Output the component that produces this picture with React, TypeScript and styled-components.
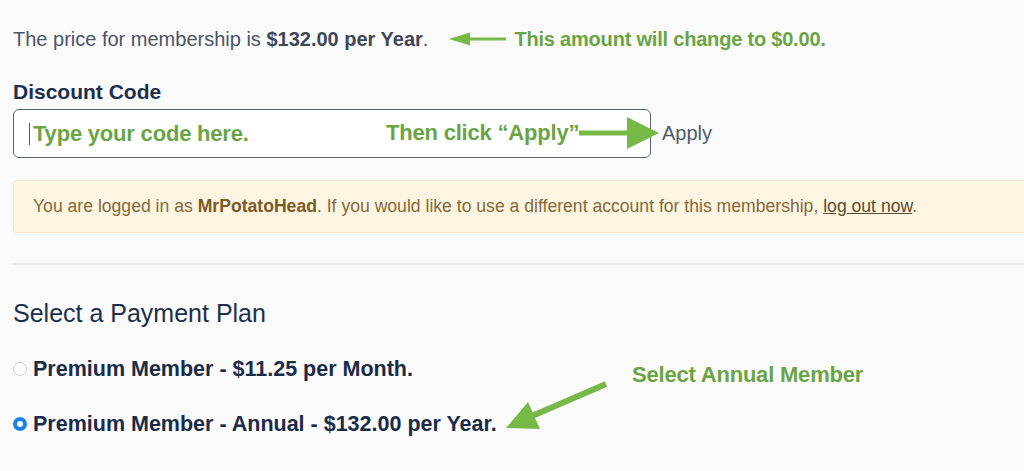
import React from "react";
import styled, { createGlobalStyle } from "styled-components";

const GlobalStyle = createGlobalStyle`
  body {
    margin: 0;
    background: #fafafa;
    font-family: "Liberation Sans", Arial, sans-serif;
  }
`;

const Page = styled.div`
  position: relative;
  width: 1024px;
  height: 471px;
  overflow: hidden;
  padding: 27px 0 0 13px;
  box-sizing: border-box;
`;

const PriceRow = styled.div`
  display: flex;
  align-items: center;
  height: 24px;
`;

const PriceText = styled.p`
  margin: 0;
  font-size: 20px;
  color: #4a5566;
  b {
    color: #3e4858;
  }
`;

const Note = styled.span<{ $size?: number }>`
  font-weight: bold;
  font-size: ${(p) => p.$size || 20}px;
  color: #6aa444;
  letter-spacing: -0.2px;
  white-space: nowrap;
`;

const Label = styled.div`
  margin-top: 30px;
  font-size: 21px;
  line-height: 22px;
  font-weight: bold;
  color: #1d2f4e;
`;

const InputRow = styled.div`
  position: relative;
  display: flex;
  align-items: center;
  margin-top: 6px;
`;

const CodeBox = styled.div`
  width: 638px;
  height: 49px;
  box-sizing: border-box;
  border: 1px solid #59667a;
  border-radius: 6px;
  background: #fff;
  display: flex;
  align-items: center;
  padding-left: 15px;
`;

const Caret = styled.span`
  width: 1px;
  height: 22px;
  background: #555;
  margin-right: 3px;
`;

const ApplyButton = styled.button`
  border: none;
  background: none;
  padding: 0;
  margin-left: 11px;
  font-family: inherit;
  font-size: 20px;
  color: #4e5a6c;
`;

const Overlay = styled.div<{ $x: number; $y: number }>`
  position: absolute;
  left: ${(p) => p.$x}px;
  top: ${(p) => p.$y}px;
  display: flex;
  align-items: center;
`;

const Notice = styled.div`
  margin-top: 22px;
  width: 1030px;
  height: 53px;
  box-sizing: border-box;
  background: #fcf5e2;
  border: 1px solid #f8e9c4;
  border-radius: 4px;
  display: flex;
  align-items: center;
  padding-left: 19px;
  font-size: 17.6px;
  color: #86693a;
  b {
    color: #7b5a26;
  }
  a {
    color: #5e4a2c;
    text-decoration: underline;
  }
`;

const Divider = styled.hr`
  margin: 30px 0 0;
  border: none;
  height: 2px;
  background: #ececec;
`;

const SectionTitle = styled.h2`
  margin: 34px 0 0;
  font-size: 25px;
  line-height: 28px;
  font-weight: normal;
  color: #1d2f4e;
`;

const PlanRow = styled.label<{ $gap: number }>`
  display: flex;
  align-items: center;
  gap: 6px;
  height: 24px;
  margin-top: ${(p) => p.$gap}px;
  font-size: 21.5px;
  font-weight: bold;
  color: #1a2b48;
`;

const Radio = styled.span<{ $checked?: boolean }>`
  flex: none;
  width: 14px;
  height: 14px;
  border-radius: 50%;
  box-sizing: border-box;
  background: ${(p) => (p.$checked ? "#fff" : "#fcfcfc")};
  border: ${(p) => (p.$checked ? "4px solid #1b7ff0" : "1px solid #cfcfcf")};
`;

const green = "#76b947";

export default function App() {
  return (
    <Page>
      <GlobalStyle />
      <PriceRow>
        <PriceText>
          The price for membership is <b>$132.00 per Year</b>.
        </PriceText>
        <svg width="57" height="14" viewBox="0 0 57 14" style={{ marginLeft: 21 }}>
          <polygon points="0,7 21,0.5 21,13.5" fill={green} />
          <rect x="19" y="5.5" width="38" height="3" fill={green} />
        </svg>
        <Note style={{ marginLeft: 8 }}>This amount will change to $0.00.</Note>
      </PriceRow>

      <Label>Discount Code</Label>
      <InputRow>
        <CodeBox>
          <Caret />
          <Note $size={22}>Type your code here.</Note>
        </CodeBox>
        <ApplyButton>Apply</ApplyButton>
        <Overlay $x={373} $y={8}>
          <Note $size={22}>Then click “Apply”</Note>
          <svg width="80" height="32" viewBox="0 0 80 32">
            <rect x="0" y="13.5" width="50" height="5" fill={green} />
            <polygon points="48,0 80,16 48,32" fill={green} />
          </svg>
        </Overlay>
      </InputRow>

      <Notice>
        <span>
          You are logged in as <b>MrPotatoHead</b>. If you would like to use a
          different account for this membership, <a href="#">log out now</a>.
        </span>
      </Notice>

      <Divider />

      <SectionTitle>Select a Payment Plan</SectionTitle>
      <PlanRow $gap={30}>
        <Radio />
        Premium Member - $11.25 per Month.
      </PlanRow>
      <PlanRow $gap={31}>
        <Radio $checked />
        Premium Member - Annual - $132.00 per Year.
      </PlanRow>

      <Overlay $x={632} $y={362}>
        <Note $size={22}>Select Annual Member</Note>
      </Overlay>
      <svg
        width="110"
        height="52"
        viewBox="0 0 110 52"
        style={{ position: "absolute", left: 502, top: 380 }}
      >
        <line x1="104" y1="4" x2="30" y2="36" stroke={green} strokeWidth="6" />
        <polygon points="4,48 26,22 38,49" fill={green} />
      </svg>
    </Page>
  );
}
